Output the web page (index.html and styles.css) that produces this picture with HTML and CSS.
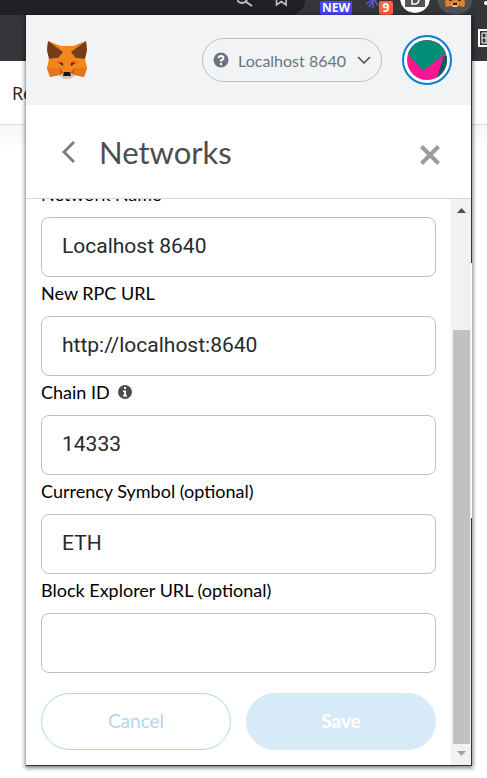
FILE: index.html
```html
<!DOCTYPE html>
<html lang="en">
<head>
<meta charset="utf-8">
<meta name="viewport" content="width=device-width, initial-scale=1">
<title>Networks</title>
<link rel="stylesheet" href="styles.css">
</head>
<body>
<div class="browser">
  <div class="toolbar">
    <div class="omnibox">
      <svg width="56" height="15" viewBox="0 0 56 15" fill="none" stroke="#bdc1c6" stroke-width="2" aria-hidden="true"><circle cx="5" cy="-2" r="5"/><path d="M8.500 1.500 15 6"/><path d="M39.500-1v6l4.800-3.500 4.800 3.500v-6" stroke-width="1.600"/></svg>
    </div>
    <div class="extensions">
      <span class="tag">NEW</span>
      <svg class="burst" width="14" height="15" viewBox="0 0 14 15" stroke="#5a55df" stroke-width="1.500" aria-hidden="true"><path d="M1 4 9-1M4 7 9-1M8 8V-1M13 6 9-1"/></svg>
      <span class="count">9</span>
      <svg class="disc" width="32" height="15" viewBox="0 0 32 15" aria-hidden="true"><circle cx="16" cy="-2" r="15" fill="#fff"/><path d="M6-2h20v9H6z" fill="#555"/><path d="M13-4v8h3q4 0 4-6" fill="none" stroke="#fff" stroke-width="1.500"/></svg>
      <svg width="36" height="15" viewBox="0 0 36 15" aria-hidden="true"><circle cx="18" cy="-3" r="18" fill="#505154"/><path d="M9-2h18l1 5-1 4-5-1-2 1h-4l-2-1-5 1-1-4z" fill="#e98027"/><path d="M15 3h6l-1 4h-4z" fill="#d7c1b3"/><path d="M16 3h4v2h-4z" fill="#222"/><path d="M12 0h3v1h-3zM21 0h3v1h-3z" fill="#333"/></svg>
      <svg class="dots" width="4" height="15" aria-hidden="true"><circle cx="3" cy="3" r="2" fill="#fff"/></svg>
    </div>
  </div>
  <div class="bookmarks"><svg width="9" height="18" viewBox="0 0 9 18" fill="none" stroke="#fff" aria-hidden="true"><path d="M9 1H1v16h8" stroke-width="2"/><path d="M4 4v10M8 4v10M4 4h5M4 9h5M4 14h5"/></svg></div>
  <div class="tabs">Re</div>
  <div class="page"></div>
</div>

<main class="popup">
  <header class="app-bar">
    <svg class="fox" width="42" height="40" viewBox="0 0 42 40" role="img" aria-label="Fox logo">
      <path d="M2 1 15 6h12L40 1l1 10-3 8 3 9-3 9-9-2-4 3h-8l-4-3-9 2-3-9 3-9-3-8z" fill="#f6851b"/>
      <path d="M2 1 17 12 12 18 3 19 1 10zM40 1 25 12l5 6 9 1 2-9z" fill="#763d16"/>
      <path d="M1 28h13l-1 7-9 2zM41 28H28l1 7 9 2z" fill="#e4761b"/>
      <path d="M3 19l9-1-1 4-10 6zM39 19l-9-1 1 4 10 6z" fill="#f6851b"/>
      <path d="M10 22l6-1 2 5zM32 22l-6-1-2 5z" fill="#cd6116"/>
      <path d="M13 23l4 0 0 3zM29 23l-4 0 0 3z" fill="#233447"/>
      <path d="M14 28l4 5-5 2zM28 28l-4 5 5 2z" fill="#cd6116"/>
      <path d="M13 35l5-2h6l5 2-5 4h-6z" fill="#d7c1b3"/>
      <path d="M18 32h6l1 4h-8z" fill="#161616"/>
    </svg>
    <button class="network" type="button">
      <svg width="16" height="16" viewBox="0 0 16 16" aria-hidden="true"><circle cx="8" cy="8" r="7.500" fill="#6a737d"/><path d="M5.500 6.200Q5.800 4 8 4t2.500 2Q10.500 7.500 8 8.500V9.500" fill="none" stroke="#fff" stroke-width="2"/><circle cx="8" cy="12" r="1.200" fill="#fff"/></svg>
      <span>Localhost 8640</span>
      <svg width="14" height="8" viewBox="0 0 14 8" fill="none" stroke="#4d4d4d" stroke-width="1.500" aria-hidden="true"><path d="M1 1l6 6 6-6"/></svg>
    </button>
    <button class="account" type="button" aria-label="Account">
      <svg width="40" height="40" viewBox="0 0 40 40" aria-hidden="true"><clipPath id="face"><circle cx="20" cy="20" r="20"/></clipPath><g clip-path="url(#face)"><path d="M0 0h40v40H0z" fill="#ff1493"/><path d="M37 16 29 40h11V16z" fill="#01605a"/><path d="M-2 11 16 31 39 13V-2H-2z" fill="#018e77"/></g></svg>
    </button>
  </header>

  <div class="title-bar">
    <button class="plain" type="button" aria-label="Back"><svg width="14" height="22" viewBox="0 0 14 22" fill="none" stroke="#808080" stroke-width="3" aria-hidden="true"><path d="M13 1 3 11l10 10"/></svg></button>
    <h1>Networks</h1>
    <button class="plain close" type="button" aria-label="Close"><svg width="20" height="20" viewBox="0 0 20 20" stroke="#9b9b9b" stroke-width="4" aria-hidden="true"><path d="M1.500 1.500l17 17M18.500 1.500l-17 17"/></svg></button>
  </div>

  <div class="content">
    <form class="form">
      <label for="name">Network Name</label>
      <input id="name" type="text" value="Localhost 8640">
      <label for="rpc">New RPC URL</label>
      <input id="rpc" type="text" value="http://localhost:8640">
      <label for="chain">Chain ID <svg width="14" height="14" viewBox="0 0 14 14" aria-hidden="true"><circle cx="7" cy="7" r="7" fill="#4d4d4d"/><path d="M6 2h2v2H6zM5 5.500h3V10h1v1.500H5V10h1V7H5z" fill="#fff"/></svg></label>
      <input id="chain" type="text" value="14333">
      <label for="symbol">Currency Symbol (optional)</label>
      <input id="symbol" type="text" value="ETH">
      <label for="explorer">Block Explorer URL (optional)</label>
      <input id="explorer" type="text">
      <div class="actions">
        <button class="cancel" type="button">Cancel</button>
        <button class="save" type="submit">Save</button>
      </div>
    </form>
    <div class="scrollbar" aria-hidden="true">
      <svg width="9" height="5" viewBox="0 0 9 5"><path d="M0 5 4.500 0 9 5z" fill="#505050"/></svg>
      <div class="track"><div class="thumb"></div></div>
      <svg width="9" height="5" viewBox="0 0 9 5"><path d="M0 0h9L4.500 5z" fill="#a3a3a3"/></svg>
    </div>
  </div>
</main>
</body>
</html>
```
FILE: styles.css
```css
* { box-sizing: border-box; }

body {
  margin: 0;
  min-height: 100vh;
  position: relative;
  overflow: hidden;
  background: #fff;
  font-family: Lato, "Liberation Sans", sans-serif;
  color: #000;
}

button, input { font: inherit; margin: 0; }
svg { display: block; flex: none; }

.toolbar {
  display: flex;
  justify-content: space-between;
  height: 15px;
  overflow: hidden;
  background: #35363a;
}
.omnibox {
  width: 305px;
  padding-right: 12px;
  display: flex;
  justify-content: flex-end;
  background: #202124;
  border-bottom-right-radius: 15px;
}
.extensions { display: flex; }
.tag, .count {
  height: 14px;
  margin-top: 1px;
  border-radius: 2px;
  color: #fff;
  font: bold 12px/14px "Open Sans", sans-serif;
  text-align: center;
}
.tag { width: 32px; background: #4646ff; }
.burst { margin-left: 13px; }
.count { width: 14px; background: #ff6040; }
.disc { margin: 0 6px; }
.dots { margin-left: 10px; }
.bookmarks {
  height: 46px;
  padding-top: 14px;
  display: flex;
  justify-content: flex-end;
  background: #35363a;
}
.tabs {
  height: 64px;
  padding-left: 12px;
  border-bottom: 1px solid #dadce0;
  font: 18px/64px "Open Sans", sans-serif;
  color: #202020;
}
.page { height: 24px; background: linear-gradient(#f7f7f7, #fff); }

.popup {
  position: absolute;
  inset: 15px 15px 12px 26px;
  display: flex;
  flex-direction: column;
  border-right: 1px solid transparent;
  border-bottom: 1px solid #303236;
  background:
    linear-gradient(#303236 33%, #fff 33%, #fff 67%, #303236 67%) right / 1px 100% no-repeat border-box,
    #fff;
  box-shadow: 0 1px 4px 1px rgba(0, 0, 0, 0.5);
}

.app-bar {
  flex: none;
  display: flex;
  align-items: center;
  height: 90px;
  padding: 0 19px 0 20px;
  background: #f2f3f4;
}
.network {
  display: flex;
  align-items: center;
  gap: 9px;
  height: 44px;
  margin-left: auto;
  padding: 0 10px;
  border: 1px solid #bbc0c5;
  border-radius: 22px;
  background: none;
  color: #6a737d;
  font-size: 16px;
}
.network span { padding-right: 2px; }
.account {
  width: 50px;
  height: 50px;
  margin-left: 20px;
  padding: 3px;
  border: 2px solid #037dd6;
  border-radius: 50%;
  background: #fff;
}

.title-bar {
  flex: none;
  display: flex;
  align-items: center;
  height: 94px;
  padding: 0 31px 0 35px;
  border-bottom: 1px solid #d2d6da;
}
.title-bar h1 {
  flex: 1;
  margin: 0 0 0 24px;
  font-size: 31px;
  font-weight: 400;
  color: #4d4d4d;
}
.plain { padding: 0; border: 0; background: none; }
.close { padding-top: 6px; }

.content {
  flex: 1;
  min-height: 0;
  display: flex;
  overflow: hidden;
}
.form {
  flex: 1;
  min-width: 0;
  display: flex;
  flex-direction: column;
  justify-content: flex-end;
  padding: 0 15px;
}
.form label {
  flex: none;
  display: flex;
  align-items: center;
  gap: 8px;
  height: 31px;
  margin-bottom: 8px;
  font-size: 18px;
}
.form input {
  flex: none;
  width: 100%;
  height: 60px;
  padding: 0 20px 2px;
  border: 1px solid #bbc0c5;
  border-radius: 8px;
  background: #fff;
  color: #24292e;
  font-family: Roboto, sans-serif;
  font-size: 21px;
}
.actions {
  flex: none;
  display: flex;
  gap: 15px;
  padding: 20px 0 15px;
}
.actions button {
  flex: 1;
  height: 57px;
  padding: 0 6px 2px;
  border: 1px solid;
  border-radius: 29px;
  font-size: 19px;
}
.cancel { border-color: #b0d7f2; background: #fff; color: #b0d7f2; }
.actions .save { border-color: #d7eaf8; background: #d7eaf8; color: #fff; font-weight: 700; }

.scrollbar {
  width: 20px;
  display: flex;
  flex-direction: column;
  align-items: center;
  padding: 9px 1px 9px 2px;
  background: #f1f1f1;
}
.track {
  flex: 1;
  width: 100%;
  margin: 7px 0;
  display: flex;
  align-items: flex-end;
}
.thumb { width: 100%; height: 79%; background: #c1c1c1; }
```
